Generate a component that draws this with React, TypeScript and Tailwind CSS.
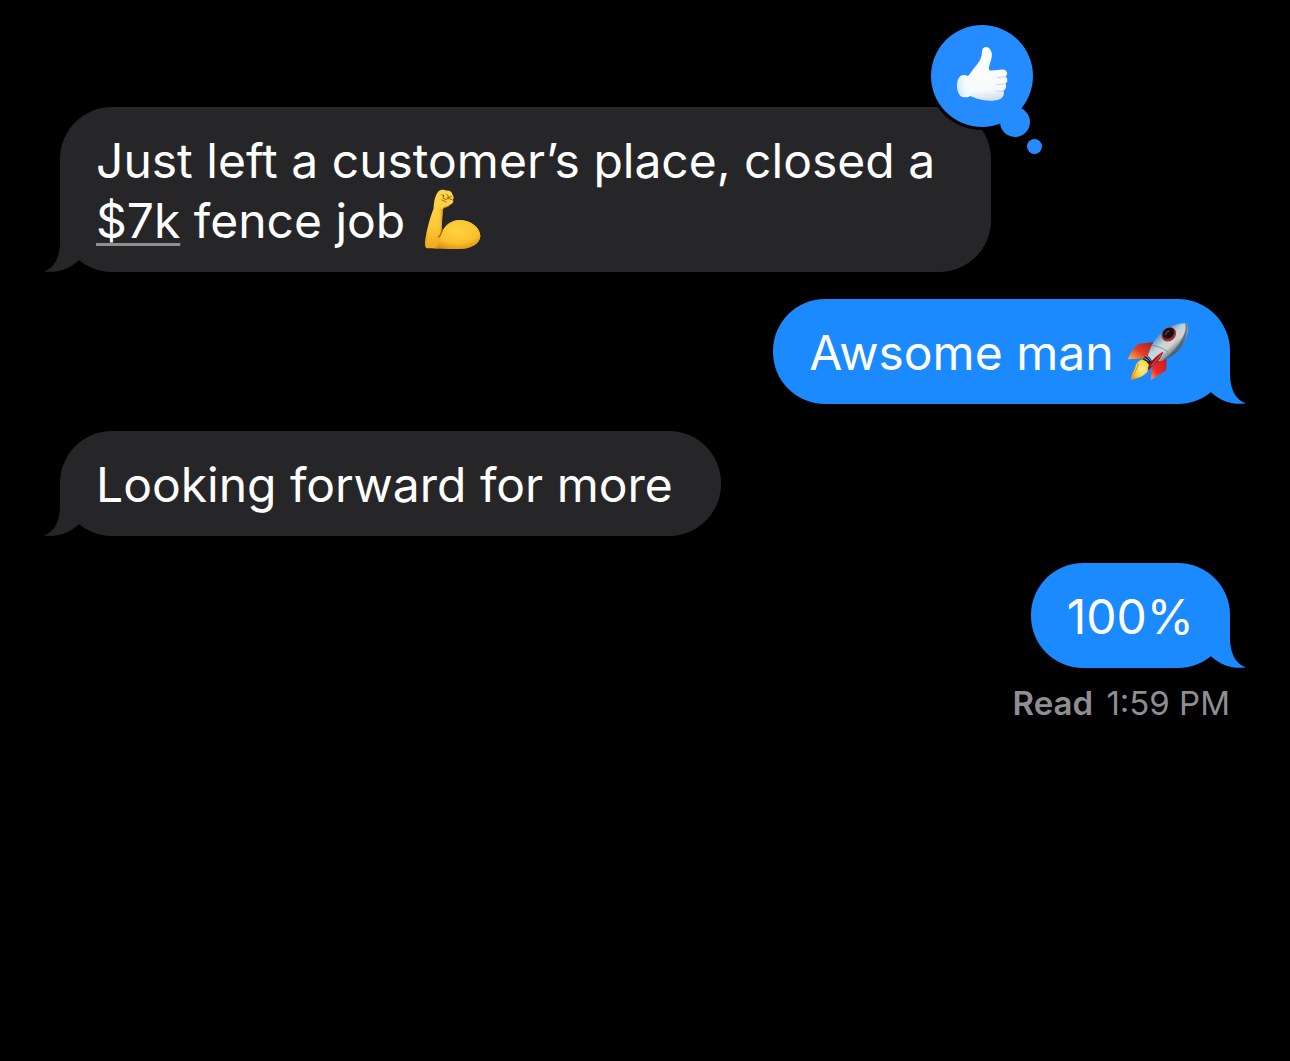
import type { ReactNode } from "react";

function Tail({ side }: { side: "left" | "right" }) {
  return (
    <svg
      aria-hidden="true"
      viewBox="0 0 36 52"
      className={
        side === "left"
          ? "absolute bottom-0 -left-4 h-[52px] w-9"
          : "absolute -right-4 bottom-0 h-[52px] w-9 -scale-x-100"
      }
    >
      <path
        fill="currentColor"
        d="M16 0V22C16 36 11 48 0 51.3C14 53.500 26 48.500 35 40.200L42 20V0Z"
      />
    </svg>
  );
}

function Biceps() {
  return (
    <svg
      role="img"
      aria-label="Flexed biceps"
      viewBox="44 24 178 188"
      className="-my-2 ml-1 inline-block h-[62px] w-[60px] align-[-4px]"
    >
      <defs>
        <linearGradient id="arm" x1="0" y1="0" x2="0.25" y2="1">
          <stop offset="0" stopColor="#ffd84f" />
          <stop offset="0.6" stopColor="#ffcb37" />
          <stop offset="1" stopColor="#eda51d" />
        </linearGradient>
        <radialGradient id="bulge" cx="0.5" cy="0.35" r="0.7">
          <stop offset="0" stopColor="#ffd341" />
          <stop offset="0.65" stopColor="#fcc02c" />
          <stop offset="1" stopColor="#dd9017" />
        </radialGradient>
        <linearGradient id="armShade" x1="0" y1="0" x2="1" y2="0">
          <stop offset="0" stopColor="#d98714" stopOpacity="0.7" />
          <stop offset="0.25" stopColor="#ffcf3d" stopOpacity="0" />
          <stop offset="0.7" stopColor="#ffcf3d" stopOpacity="0" />
          <stop offset="1" stopColor="#d07c12" stopOpacity="0.85" />
        </linearGradient>
      </defs>
      <path
        fill="url(#arm)"
        d="M88 35C95 27 107 28 114 32C122 31 130 36 131 43C135 49 136 55 133 59C136 66 131 73 124 75C119 82 108 83 103 87C101 105 99 126 99 159C108 135 131 121 154 121C188 122 216 145 216 171C213 193 190 207 158 208C122 210 78 208 54 207C47 204 47 193 49 182C54 148 64 112 74 87C75 67 78 47 88 35Z"
      />
      <path
        fill="url(#bulge)"
        d="M96 170C104 138 130 121 154 121C188 122 216 145 216 171C213 193 190 207 158 208C130 209 98 208 76 207C88 200 94 188 96 170Z"
      />
      <path
        fill="url(#armShade)"
        d="M76 84L103 87C100 108 99 130 99 160C96 184 80 200 55 207C47 204 47 193 49 182C54 148 64 112 76 84Z"
      />
      <path d="M100 150C99 160 96 167 89 173" fill="none" stroke="#b0640f" strokeWidth="4" strokeLinecap="round" />
      <path
        d="M99 45L106 47L102 54L109 58M114 43C118 45 119 49 117 53L128 50M111 58C119 54 126 57 131 60M99 60C104 64 109 63 113 67"
        fill="none"
        stroke="#965a10"
        strokeWidth="3"
        strokeLinecap="round"
        strokeLinejoin="round"
      />
      <path d="M104 84C110 82 119 80 124 75" fill="none" stroke="#bd7614" strokeWidth="3" />
    </svg>
  );
}

function Rocket() {
  return (
    <svg
      role="img"
      aria-label="Rocket"
      viewBox="54 96 190 182"
      className="-my-2 mr-1 inline-block h-[61px] w-[63px] align-[-4px]"
    >
      <defs>
        <linearGradient id="hull" x1="0.2" y1="0.2" x2="0.75" y2="0.8">
          <stop offset="0" stopColor="#376f9e" />
          <stop offset="0.25" stopColor="#78a9c9" />
          <stop offset="0.45" stopColor="#c3d3dc" />
          <stop offset="0.65" stopColor="#d5d4d0" />
          <stop offset="0.82" stopColor="#8696a0" />
          <stop offset="1" stopColor="#3e5566" />
        </linearGradient>
        <linearGradient id="finLeft" x1="1" y1="0" x2="0" y2="1">
          <stop offset="0" stopColor="#9c2227" />
          <stop offset="0.55" stopColor="#e63d27" />
          <stop offset="1" stopColor="#ffb941" />
        </linearGradient>
        <linearGradient id="finRight" x1="1" y1="0" x2="0.1" y2="1">
          <stop offset="0" stopColor="#bd1724" />
          <stop offset="0.7" stopColor="#ee2d25" />
          <stop offset="1" stopColor="#ff914a" />
        </linearGradient>
        <radialGradient id="flame" cx="0.55" cy="0.45" r="0.65">
          <stop offset="0" stopColor="#fff39a" />
          <stop offset="0.6" stopColor="#ffd23c" />
          <stop offset="1" stopColor="#ef8f21" />
        </radialGradient>
      </defs>
      <path fill="url(#finLeft)" d="M134 158L91 164C80 169 66 188 57 210L98 208L122 198Z" />
      <path fill="url(#finRight)" d="M174 205C173 222 174 238 170 245L127 273L128 240L151 204Z" />
      <path fill="url(#flame)" d="M110 210C92 210 82 219 79 235C76 246 66 254 66 273C76 270 84 269 93 265C110 258 122 242 125 230Z" />
      <path d="M88 223C86 238 79 246 71 263" fill="none" stroke="#f59b2d" strokeWidth="4" />
      <path
        fill="url(#hull)"
        d="M236 103C218 97 183 109 162 127C137 148 124 174 117 199L131 216L158 216C193 206 221 178 232 147C238 130 239 116 236 103Z"
      />
      <path d="M128 168C142 169 169 179 178 190" fill="none" stroke="#53768e" strokeWidth="3" opacity="0.65" />
      <path fill="#44596a" d="M236 103C240 124 231 151 219 170C206 190 185 208 158 216C190 194 216 163 227 133C231 121 232 110 229 102Z" opacity="0.7" />
      <path fill="#182436" d="M106 202L121 204L130 219L122 230L113 217L102 212Z" />
      <path d="M104 205L119 215M113 201L126 215" stroke="#8a9ca8" strokeWidth="3" />
      <path fill="#8d121a" d="M164 188C151 193 130 211 119 230L116 244C130 234 147 216 154 207Z" />
      <path d="M157 196L127 231" stroke="#ed4238" strokeWidth="4" />
      <ellipse cx="182" cy="136" rx="25" ry="21" transform="rotate(-42 182 136)" fill="#e8c5c4" />
      <ellipse cx="180" cy="135" rx="24" ry="20" transform="rotate(-42 180 135)" fill="#98303a" />
      <ellipse cx="179" cy="132" rx="19" ry="15" transform="rotate(-42 179 132)" fill="#161014" />
      <path d="M170 136C171 131 175 127 181 125" fill="none" stroke="#653c44" strokeWidth="4" strokeLinecap="round" />
    </svg>
  );
}

function LikeReaction() {
  return (
    <svg
      role="img"
      aria-label="Liked"
      viewBox="0 0 118 136"
      className="absolute -top-[85px] -right-[55px] h-[136px] w-[118px]"
    >
      <defs>
        <linearGradient id="hand" gradientUnits="userSpaceOnUse" x1="215" y1="115" x2="235" y2="275">
          <stop offset="0" stopColor="#ffffff" />
          <stop offset="0.78" stopColor="#f6fafd" />
          <stop offset="1" stopColor="#cddce8" />
        </linearGradient>
        <linearGradient id="wrist" x1="0" y1="0.6" x2="1" y2="0.4">
          <stop offset="0" stopColor="#cfe8f5" />
          <stop offset="0.5" stopColor="#eff8fc" />
          <stop offset="1" stopColor="#fbfdfe" />
        </linearGradient>
      </defs>
      <circle cx="54" cy="54" r="54" fill="#000" />
      <g fill="#248cff">
        <circle cx="54" cy="54" r="51" />
        <circle cx="87" cy="100" r="15" />
        <circle cx="106.500" cy="124.500" r="7.500" />
      </g>
      <g transform="translate(-18 -12) scale(0.33333)">
        <path
          fill="url(#hand)"
          d="M217 119C220 109 234 109 240 118C249 129 246 144 241 157C238 166 235 174 238 181C252 184 275 176 285 180C293 184 293 196 287 200C294 204 294 217 286 221C291 227 288 239 280 242C284 249 281 261 272 266C255 275 226 273 208 268C196 265 184 260 174 256L168 204C178 195 184 184 193 173C203 163 212 151 215 136C216 129 215 124 217 119Z"
        />
        <path
          fill="url(#wrist)"
          d="M151 198C159 193 168 195 174 199C181 205 184 215 184 230C184 242 183 254 178 260C158 266 147 258 143 242C138 225 142 206 151 198Z"
        />
        <path
          d="M262 203C270 201 279 202 287 200M261 223C269 224 277 223 286 221M258 243C265 245 272 244 280 242"
          fill="none"
          stroke="#c6d5e2"
          strokeWidth="3"
          strokeLinecap="round"
        />
      </g>
    </svg>
  );
}

function Received({ children, reaction }: { children: ReactNode; reaction?: ReactNode }) {
  return (
    <li className="relative w-fit max-w-[931px] self-start rounded-[52px] bg-[#262628] pt-6 pr-12 pb-[21px] pl-9 text-white">
      <span className="text-[#262628]">
        <Tail side="left" />
      </span>
      <p>{children}</p>
      {reaction}
    </li>
  );
}

function Sent({ children }: { children: ReactNode }) {
  return (
    <li className="relative w-fit self-end rounded-[52px] bg-[#1b8aff] px-9 pt-6 pb-[21px] text-white">
      <span className="text-[#1b8aff]">
        <Tail side="right" />
      </span>
      <p>{children}</p>
    </li>
  );
}

export default function App() {
  return (
    <main className="min-h-screen bg-black px-[60px] pt-[107px] font-['Inter',sans-serif]">
      <ul className="flex flex-col gap-[27px] text-[48px] leading-[60px]">
        <Received reaction={<LikeReaction />}>
          Just left a customer’s place, closed a{" "}
          <a href="#amount" className="underline decoration-[#8e8e93] decoration-[3px] underline-offset-[5px] [text-decoration-skip-ink:none]">
            $7k
          </a>{" "}
          fence job <Biceps />
        </Received>
        <Sent>
          Awsome man <Rocket />
        </Sent>
        <Received>Looking forward for more</Received>
        <Sent>100%</Sent>
      </ul>
      <p className="mt-4 text-right text-[33px] leading-[38px] text-[#8e8e93]">
        <span className="mr-1 font-semibold">Read</span> 1:59 PM
      </p>
    </main>
  );
}
